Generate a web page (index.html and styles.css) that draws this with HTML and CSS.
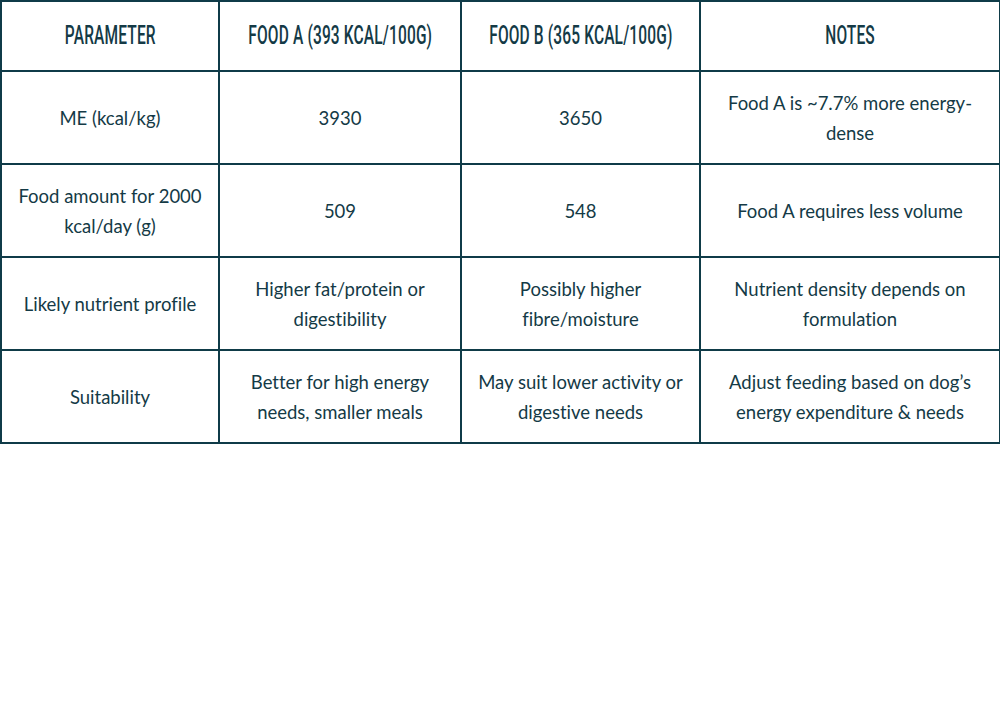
FILE: index.html
```html
<!DOCTYPE html>
<html lang="en">
<head>
<meta charset="utf-8">
<title>Food comparison</title>
<link rel="stylesheet" href="styles.css">
</head>
<body>
<table class="compare">
  <colgroup>
    <col class="c1"><col class="c2"><col class="c3"><col class="c4">
  </colgroup>
  <thead>
    <tr class="head-row">
      <th><span class="cond">Parameter</span></th>
      <th><span class="cond">Food A (393 kcal/100g)</span></th>
      <th><span class="cond">Food B (365 kcal/100g)</span></th>
      <th><span class="cond">Notes</span></th>
    </tr>
  </thead>
  <tbody>
    <tr>
      <td>ME (kcal/kg)</td>
      <td>3930</td>
      <td>3650</td>
      <td>Food A is ~7.7% more energy-dense</td>
    </tr>
    <tr>
      <td>Food amount for 2000 kcal/day (g)</td>
      <td>509</td>
      <td>548</td>
      <td>Food A requires less volume</td>
    </tr>
    <tr>
      <td>Likely nutrient profile</td>
      <td>Higher fat/protein or digestibility</td>
      <td>Possibly higher fibre/moisture</td>
      <td>Nutrient density depends on formulation</td>
    </tr>
    <tr>
      <td>Suitability</td>
      <td>Better for high energy needs, smaller meals</td>
      <td>May suit lower activity or digestive needs</td>
      <td>Adjust feeding based on dog’s energy expenditure &amp; needs</td>
    </tr>
  </tbody>
</table>
</body>
</html>
```
FILE: styles.css
```css
html, body {
  margin: 0;
  padding: 0;
  background: #ffffff;
}
body {
  font-family: Lato, "Open Sans", sans-serif;
  color: #143a46;
  font-variant-ligatures: none;
}
.compare {
  width: 999px;
  border-collapse: collapse;
  table-layout: fixed;
}
.c1 { width: 218px; }
.c2 { width: 242px; }
.c3 { width: 239px; }
.c4 { width: 300px; }
.compare th,
.compare td {
  border: 2px solid #0f3b48;
  text-align: center;
  vertical-align: middle;
  padding: 0 14px;
}
.compare th {
  height: 68px;
  font-family: Roboto, sans-serif;
  font-weight: 500;
  font-size: 25px;
  text-transform: uppercase;
  white-space: nowrap;
  line-height: 30px;
}
.cond {
  display: inline-block;
  margin: 0 -120px;
  transform: scaleX(0.62);
  transform-origin: center;
  letter-spacing: 0.01em;
}
.compare td {
  height: 91px;
  font-size: 18.5px;
  line-height: 30px;
}
```
